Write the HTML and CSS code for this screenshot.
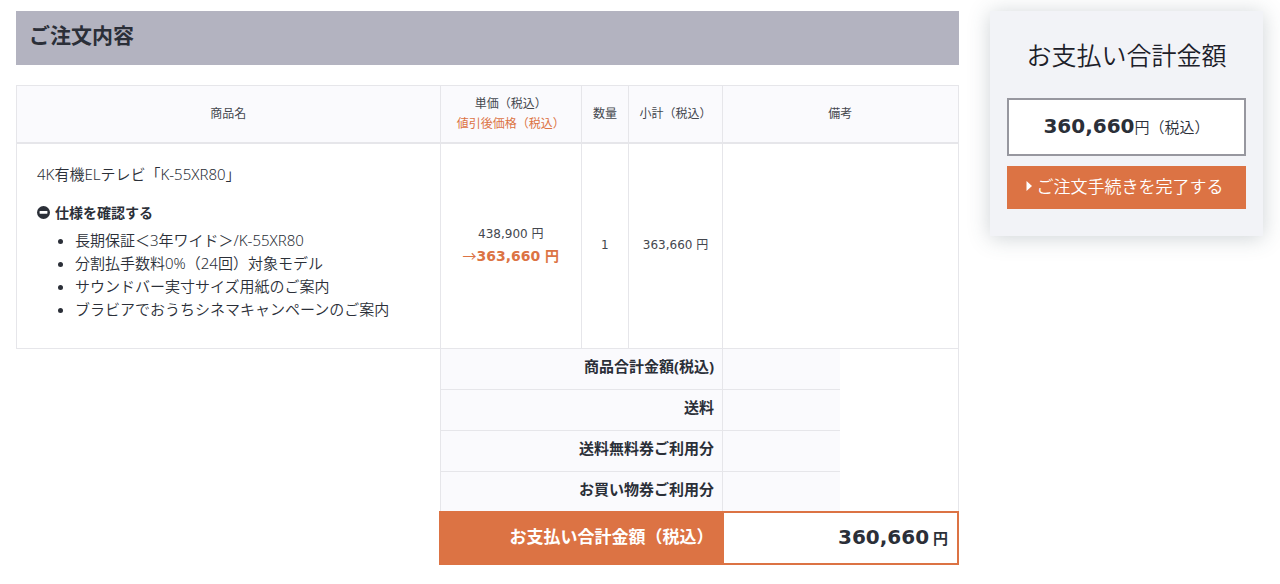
FILE: index.html
```html
<!DOCTYPE html>
<html lang="ja">

<head>
    <meta charset="UTF-8">
    <meta name="viewport" content="width=device-width, initial-scale=1.0">
    <title>ご注文内容</title>
    <link rel="stylesheet" href="styles.css">
</head>

<body>
    <div class="page">
        <main class="order">
            <h1 class="order-title">ご注文内容</h1>

            <table class="order-table">
                <colgroup>
                    <col class="col-name">
                    <col class="col-price">
                    <col class="col-qty">
                    <col class="col-subtotal">
                    <col class="col-note">
                    <col class="col-note">
                </colgroup>
                <thead>
                    <tr>
                        <th scope="col">商品名</th>
                        <th scope="col">単価（税込）<br><span class="discount">値引後価格（税込）</span></th>
                        <th scope="col">数量</th>
                        <th scope="col">小計（税込）</th>
                        <th scope="col" colspan="2">備考</th>
                    </tr>
                </thead>
                <tbody>
                    <tr>
                        <td class="product">
                            <p class="product-name">4K有機ELテレビ「K-55XR80」</p>
                            <details open>
                                <summary>
                                    <svg class="minus" viewBox="0 0 12 12" aria-hidden="true">
                                        <circle cx="6" cy="6" r="6" fill="#2b2f38" />
                                        <rect x="2.4" y="4.7" width="7.2" height="2.4" rx=".4" fill="#fff" />
                                    </svg>
                                    仕様を確認する
                                </summary>
                                <ul>
                                    <li>長期保証＜3年ワイド＞/K-55XR80</li>
                                    <li>分割払手数料0%（24回）対象モデル</li>
                                    <li>サウンドバー実寸サイズ用紙のご案内</li>
                                    <li>ブラビアでおうちシネマキャンペーンのご案内</li>
                                </ul>
                            </details>
                        </td>
                        <td class="number">438,900 円<br><span class="new-price"><span class="arrow">→</span>363,660 円</span></td>
                        <td class="number">1</td>
                        <td class="number">363,660 円</td>
                        <td colspan="2"></td>
                    </tr>
                </tbody>
                <tfoot>
                    <tr>
                        <td class="empty" rowspan="5"></td>
                        <th class="sum-label" scope="row" colspan="3">商品合計金額(税込)</th>
                        <td class="sum-value"></td>
                        <td class="sum-blank" rowspan="4"></td>
                    </tr>
                    <tr>
                        <th class="sum-label" scope="row" colspan="3">送料</th>
                        <td class="sum-value"></td>
                    </tr>
                    <tr>
                        <th class="sum-label" scope="row" colspan="3">送料無料券ご利用分</th>
                        <td class="sum-value"></td>
                    </tr>
                    <tr>
                        <th class="sum-label" scope="row" colspan="3">お買い物券ご利用分</th>
                        <td class="sum-value"></td>
                    </tr>
                    <tr>
                        <th class="total-label" scope="row" colspan="3">お支払い合計金額（税込）</th>
                        <td class="total-value" colspan="2"><span class="amount">360,660</span> 円</td>
                    </tr>
                </tfoot>
            </table>
        </main>

        <aside class="payment">
            <h2 class="payment-title">お支払い合計金額</h2>
            <p class="payment-price"><span class="amount">360,660</span>円（税込）</p>
            <button class="submit" type="button">
                <svg class="caret" viewBox="0 0 6 10" aria-hidden="true">
                    <path d="M0.5 0 L6 5 L0.5 10 Z" fill="#fff" />
                </svg>
                ご注文手続きを完了する
            </button>
        </aside>
    </div>
</body>

</html>
```

FILE: styles.css
```css
* {
    box-sizing: border-box;
}

body {
    margin: 0;
    background-color: #fff;
    color: #2b2f38;
    font-family: "Noto Sans", "Noto Sans CJK JP", sans-serif;
    font-size: 15px;
    line-height: 23px;
}

h1,
h2,
p,
ul {
    margin: 0;
}

.page {
    display: flex;
    align-items: flex-start;
    gap: 31px;
    padding: 11px 17px 20px 16px;
}

.order {
    flex: 1;
    min-width: 0;
}

.order-title {
    padding: 9px 13px 15px;
    margin-bottom: 20px;
    background-color: #b3b3c0;
    font-size: 21px;
    line-height: 30px;
}

/* order table */
.order-table {
    width: 100%;
    table-layout: fixed;
    border-collapse: collapse;
}

.col-name {
    width: 45%;
}

.col-price {
    width: 15%;
}

.col-qty {
    width: 5%;
}

.col-subtotal {
    width: 10%;
}

.col-note {
    width: 12.5%;
}

th,
td {
    padding: 0;
    border: 1px solid #e6e6ea;
}

thead th {
    height: 57px;
    background-color: #fafafd;
    color: #44474e;
    font-size: 12px;
    font-weight: 400;
    line-height: 20px;
    border-bottom: 2px solid #e6e6ea;
}

.discount,
.new-price {
    color: #dc7344;
}

.product {
    padding: 19px 20px 27px;
    font-weight: 350;
}

.product-name {
    margin-bottom: 15px;
}

summary {
    display: flex;
    align-items: center;
    gap: 5px;
    margin-bottom: 5px;
    font-size: 14px;
    font-weight: 700;
    cursor: pointer;
}

.minus {
    width: 13px;
    height: 13px;
}

.product ul {
    padding-left: 38px;
}

.number {
    color: #44474e;
    font-family: "DejaVu Sans", "Noto Sans CJK JP", sans-serif;
    font-size: 12px;
    line-height: 21px;
    text-align: center;
}

.new-price {
    font-size: 14px;
    font-weight: 700;
}

.arrow {
    font-family: "Noto Sans CJK JP", sans-serif;
    font-weight: 400;
}

/* totals */
.empty {
    border: none;
}

.sum-label {
    height: 41px;
    padding: 0 8px 4px;
    background-color: #fafafd;
    text-align: right;
}

.sum-value {
    background-color: #fafafd;
    border-right: none;
}

.sum-blank {
    border-left: none;
}

.total-label,
.total-value {
    height: 52px;
    border: 2px solid #dc7344;
    text-align: right;
    font-weight: 700;
}

.total-label {
    padding: 0 8px 4px;
    background-color: #dc7344;
    color: #fff;
    font-size: 17px;
}

.total-value {
    padding-right: 9px;
}

.amount {
    font-family: "DejaVu Sans", sans-serif;
    font-size: 20px;
    font-weight: 700;
}

/* payment box */
.payment {
    width: 273px;
    padding: 26px 17px 27px;
    background-color: #f2f3f7;
    box-shadow: 0 2px 20px rgba(60, 80, 90, 0.25);
}

.payment-title {
    margin-bottom: 25px;
    color: #1c2029;
    font-size: 25px;
    font-weight: 350;
    line-height: 36px;
    text-align: center;
}

.payment-price {
    margin-bottom: 10px;
    padding: 15px 0;
    border: 2px solid #97979f;
    background-color: #fff;
    font-weight: 350;
    text-align: center;
}

.submit {
    display: flex;
    align-items: center;
    justify-content: center;
    gap: 5px;
    width: 100%;
    height: 43px;
    padding: 0 4px 4px 0;
    border: none;
    background-color: #dc7344;
    color: #fff;
    font-family: inherit;
    font-size: 17px;
    font-weight: 350;
    cursor: pointer;
}

.caret {
    width: 6px;
    height: 10px;
}
```
